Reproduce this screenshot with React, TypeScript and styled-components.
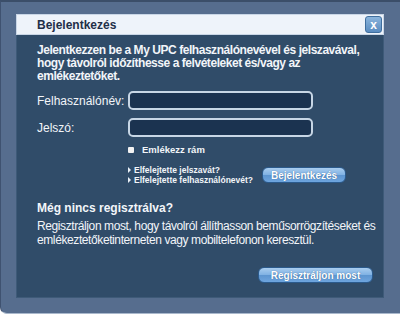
import styled, { createGlobalStyle } from 'styled-components';

const GlobalStyle = createGlobalStyle`
  html, body {
    margin: 0;
    padding: 0;
    background: #ffffff;
  }
  body {
    font-family: "Liberation Sans", Arial, sans-serif;
  }
`;

const Frame = styled.div`
  box-sizing: border-box;
  width: 402px;
  height: 314px;
  background: #566d8e;
  border-top: 2px solid #3b4e69;
  border-left: 1px solid #3f5270;
  border-bottom: 1px solid #a9b8cc;
  border-bottom-left-radius: 7px;
  padding: 12px 0 0 15px;
`;

const Dialog = styled.div`
  width: 368px;
  display: flex;
  flex-direction: column;
`;

const TitleBar = styled.div`
  box-sizing: border-box;
  height: 21px;
  background: #eef3fa;
  border: 1px solid #c9d6e6;
  display: flex;
  align-items: center;
  justify-content: space-between;
  padding: 0 1px 0 20px;
`;

const Title = styled.span`
  font-size: 12px;
  font-weight: bold;
  color: #1f2f48;
`;

const CloseButton = styled.button`
  box-sizing: border-box;
  width: 17px;
  height: 17px;
  padding: 0;
  border: 1px solid #3f6e9e;
  border-radius: 3px;
  background: linear-gradient(#8ab4dc, #5a8cc0);
  color: #ffffff;
  font-family: "Liberation Sans", Arial, sans-serif;
  font-weight: bold;
  font-size: 12px;
  line-height: 14px;
  text-align: center;
`;

const Panel = styled.div`
  box-sizing: border-box;
  height: 263px;
  background: #304c69;
  border: 1px solid #3e5a78;
  border-top: none;
  padding: 9px 4px 0 20px;
  color: #f2f5f9;
  display: flex;
  flex-direction: column;
`;

const Intro = styled.p`
  margin: 0;
  font-size: 12px;
  font-weight: bold;
  line-height: 13px;
  letter-spacing: -0.45px;
  padding-right: 12px;
`;

const Form = styled.div`
  margin-top: 8px;
  display: grid;
  grid-template-columns: 91px 185px;
  row-gap: 8px;
  align-items: center;
`;

const Label = styled.label`
  font-size: 12px;
`;

const Input = styled.input`
  box-sizing: border-box;
  width: 185px;
  height: 19px;
  margin: 0;
  background: #1b3350;
  border: 2px solid #c7d6e5;
  border-radius: 5px;
  outline: none;
  color: #ffffff;
`;

const Options = styled.div`
  margin: 7px 0 0 91px;
  display: flex;
  flex-direction: column;
`;

const Remember = styled.label`
  display: flex;
  align-items: center;
  gap: 8px;
  font-size: 9.5px;
  font-weight: bold;
`;

const Box = styled.span`
  width: 6px;
  height: 6px;
  background: #f2f2f2;
  border-radius: 1px;
`;

const LinksRow = styled.div`
  margin-top: 10px;
  display: flex;
  align-items: center;
  justify-content: space-between;
  width: 218px;
`;

const Links = styled.div`
  display: flex;
  flex-direction: column;
`;

const LinkItem = styled.a`
  display: flex;
  align-items: center;
  gap: 3px;
  font-size: 8.5px;
  font-weight: bold;
  line-height: 10px;
  color: #f2f5f9;
  text-decoration: none;
  &::before {
    content: '';
    border-left: 3px solid #e8eef5;
    border-top: 3px solid transparent;
    border-bottom: 3px solid transparent;
  }
`;

const BlueButton = styled.button<{ $w: number }>`
  box-sizing: border-box;
  width: ${(p) => p.$w}px;
  height: 16px;
  padding: 0;
  border: 1px solid #2b5a8c;
  border-radius: 6px;
  background: linear-gradient(#a9cdef 0%, #7fb1e3 50%, #5d95d0 51%, #6ea5de 100%);
  color: #ffffff;
  font-family: "Liberation Sans", Arial, sans-serif;
  font-size: 10px;
  font-weight: bold;
  text-shadow: 0 0 1px #2a5a8a;
  cursor: pointer;
`;

const SubTitle = styled.h3`
  margin: 16px 0 0 0;
  font-size: 12px;
  font-weight: bold;
  line-height: 14px;
`;

const Info = styled.p`
  margin: 4px 0 0 0;
  font-size: 12px;
  line-height: 14px;
  letter-spacing: -0.4px;
  white-space: nowrap;
`;

const Footer = styled.div`
  margin-top: 20px;
  display: flex;
  justify-content: flex-end;
  padding-right: 6px;
`;

export default function App() {
  return (
    <>
      <GlobalStyle />
      <Frame>
        <Dialog>
          <TitleBar>
            <Title>Bejelentkezés</Title>
            <CloseButton>x</CloseButton>
          </TitleBar>
          <Panel>
            <Intro>
              Jelentkezzen be a My UPC felhasználónevével és jelszavával,
              hogy távolról időzíthesse a felvételeket és/vagy az
              emlékeztetőket.
            </Intro>
            <Form>
              <Label>Felhasználónév:</Label>
              <Input type="text" />
              <Label>Jelszó:</Label>
              <Input type="password" />
            </Form>
            <Options>
              <Remember>
                <Box />
                Emlékezz rám
              </Remember>
              <LinksRow>
                <Links>
                  <LinkItem href="#">Elfelejtette jelszavát?</LinkItem>
                  <LinkItem href="#">Elfelejtette felhasználónevét?</LinkItem>
                </Links>
                <BlueButton $w={84}>Bejelentkezés</BlueButton>
              </LinksRow>
            </Options>
            <SubTitle>Még nincs regisztrálva?</SubTitle>
            <Info>
              Regisztráljon most, hogy távolról állíthasson beműsorrögzítéseket és
              <br />
              emlékeztetőketinterneten vagy mobiltelefonon keresztül.
            </Info>
            <Footer>
              <BlueButton $w={115}>Regisztráljon most</BlueButton>
            </Footer>
          </Panel>
        </Dialog>
      </Frame>
    </>
  );
}
